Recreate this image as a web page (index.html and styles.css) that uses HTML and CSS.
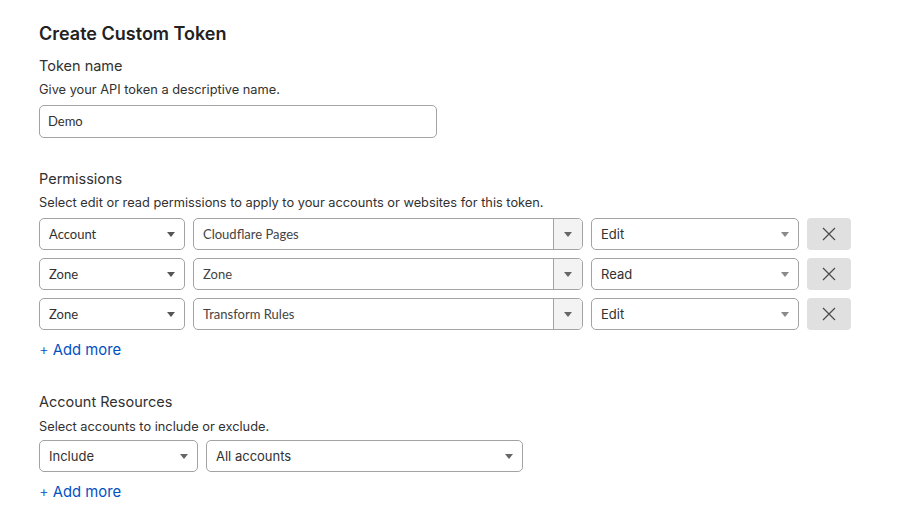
FILE: index.html
```html
<!DOCTYPE html>
<html lang="en">
<head>
<meta charset="utf-8">
<title>Create Custom Token</title>
<link rel="stylesheet" href="styles.css">
</head>
<body>
<main class="page">
  <h1 class="title">Create Custom Token</h1>

  <section class="group">
    <h2 class="label">Token name</h2>
    <p class="desc">Give your API token a descriptive name.</p>
    <div class="text-input">Demo</div>
  </section>

  <section class="group perms">
    <h2 class="label">Permissions</h2>
    <p class="desc">Select edit or read permissions to apply to your accounts or websites for this token.</p>
    <div class="rows">
      <div class="row">
        <div class="select w-type sys"><span>Account</span><i class="caret"></i></div>
        <div class="combo"><span class="combo-text">Cloudflare Pages</span><span class="combo-btn"><i class="caret grey"></i></span></div>
        <div class="select w-level"><span>Edit</span><i class="caret light"></i></div>
        <button class="remove" aria-label="Remove"><svg width="14" height="14" viewBox="0 0 14 14"><path d="M1 1L13 13M13 1L1 13" stroke="#4a4a4a" stroke-width="1.2" fill="none"/></svg></button>
      </div>
      <div class="row">
        <div class="select w-type sys"><span>Zone</span><i class="caret"></i></div>
        <div class="combo"><span class="combo-text">Zone</span><span class="combo-btn"><i class="caret grey"></i></span></div>
        <div class="select w-level"><span>Read</span><i class="caret light"></i></div>
        <button class="remove" aria-label="Remove"><svg width="14" height="14" viewBox="0 0 14 14"><path d="M1 1L13 13M13 1L1 13" stroke="#4a4a4a" stroke-width="1.2" fill="none"/></svg></button>
      </div>
      <div class="row">
        <div class="select w-type sys"><span>Zone</span><i class="caret"></i></div>
        <div class="combo"><span class="combo-text">Transform Rules</span><span class="combo-btn"><i class="caret grey"></i></span></div>
        <div class="select w-level"><span>Edit</span><i class="caret light"></i></div>
        <button class="remove" aria-label="Remove"><svg width="14" height="14" viewBox="0 0 14 14"><path d="M1 1L13 13M13 1L1 13" stroke="#4a4a4a" stroke-width="1.2" fill="none"/></svg></button>
      </div>
    </div>
    <a class="add-more" href="#"><span class="plus">+</span> Add more</a>
  </section>

  <section class="group res">
    <h2 class="label">Account Resources</h2>
    <p class="desc">Select accounts to include or exclude.</p>
    <div class="rows">
      <div class="row">
        <div class="select w-inc"><span>Include</span><i class="caret grey"></i></div>
        <div class="select w-acc"><span>All accounts</span><i class="caret grey"></i></div>
      </div>
    </div>
    <a class="add-more" href="#"><span class="plus">+</span> Add more</a>
  </section>
</main>
</body>
</html>
```

FILE: styles.css
```css
* { box-sizing: border-box; }
html, body { margin: 0; padding: 0; background: #fff; }
body {
  font-family: Inter, "Liberation Sans", sans-serif;
  color: #313131;
}
.page {
  padding: 21px 0 0 39px;
}
.title {
  margin: 0 0 8px;
  font-size: 18px;
  line-height: 26px;
  font-weight: 600;
  color: #222;
}
.group { margin: 0; }
.label {
  margin: 0;
  font-size: 14.5px;
  line-height: 22px;
  font-weight: 400;
  color: #313131;
}
.desc {
  margin: 3px 0 5px;
  font-size: 12.8px;
  line-height: 20px;
  color: #313131;
}
.text-input {
  width: 398px;
  height: 33px;
  border: 1px solid #a3a3a3;
  border-radius: 5px;
  padding: 0 8px;
  font-family: Lato, "Open Sans", sans-serif;
  font-size: 13px;
  line-height: 31px;
  color: #313131;
}
.perms { margin-top: 30px; }
.res { margin-top: 30px; }
.res .desc { margin-top: 4px; margin-bottom: 3px; }
.rows {
  display: flex;
  flex-direction: column;
  gap: 8px;
}
.row {
  display: flex;
  gap: 8px;
  height: 32px;
}
.select {
  height: 32px;
  border: 1px solid #a3a3a3;
  border-radius: 5px;
  padding: 0 9px;
  font-size: 13px;
  line-height: 30px;
  color: #313131;
  display: flex;
  align-items: center;
  justify-content: space-between;
}
.select.sys {
  font-family: Lato, "Open Sans", sans-serif;
  font-size: 13px;
}
.w-type { width: 146px; }
.w-level { width: 208px; }
.w-inc { width: 159px; }
.w-acc { width: 317px; }
.caret {
  display: block;
  width: 0;
  height: 0;
  border-left: 4.5px solid transparent;
  border-right: 4.5px solid transparent;
  border-top: 5px solid #555;
}
.caret.grey { border-top-color: #666; }
.caret.light { border-top-color: #8a8a8a; }
.combo {
  width: 390px;
  height: 32px;
  border: 1px solid #a3a3a3;
  border-radius: 5px;
  display: flex;
  overflow: hidden;
}
.combo-text {
  flex: 1;
  padding: 0 9px;
  font-family: Lato, "Open Sans", sans-serif;
  font-size: 13px;
  line-height: 30px;
  color: #444;
}
.combo-btn {
  width: 29px;
  border-left: 1px solid #a3a3a3;
  background: #f3f3f3;
  display: flex;
  align-items: center;
  justify-content: center;
}
.remove {
  width: 44px;
  height: 32px;
  border: 0;
  border-radius: 4px;
  background: #e0e0e0;
  padding: 0;
  display: flex;
  align-items: center;
  justify-content: center;
}
.add-more {
  display: inline-block;
  margin-top: 9px;
  font-size: 14.8px;
  line-height: 22px;
  color: #0051c3;
  text-decoration: none;
}
.plus { font-weight: 300; }
```
